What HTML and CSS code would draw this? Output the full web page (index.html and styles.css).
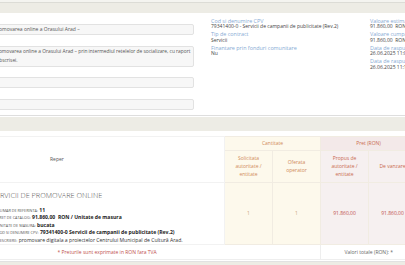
FILE: index.html
```html
<!DOCTYPE html>
<html lang="ro">
<head>
  <meta charset="UTF-8" />
  <meta name="viewport" content="width=device-width, initial-scale=1.0" />
  <title>Achizitie directa</title>
  <link rel="stylesheet" href="styles.css">
</head>
<body>
  <div class="page">
    <div class="topbar"></div>
    <div class="band"></div>

    <section class="panel">
      <div class="fields">
        <div class="field">Promovarea online a Orasului Arad –</div>
        <div class="field tall">Promovarea online a Orasului Arad – prin intermediul retelelor de socializare, cu raport<br>subscrisei.</div>
        <div class="field"></div>
        <div class="field"></div>
      </div>

      <div class="info">
        <div class="info-col first">
          <div class="item">
            <div class="label">Cod si denumire CPV</div>
            <div class="value">79341400-0 - Servicii de campanii de publicitate (Rev.2)</div>
          </div>
          <div class="item">
            <div class="label">Tip de contract</div>
            <div class="value">Servicii</div>
          </div>
          <div class="item">
            <div class="label">Finantare prin fonduri comunitare</div>
            <div class="value">Nu</div>
          </div>
        </div>
        <div class="info-col">
          <div class="item">
            <div class="label">Valoare estimata</div>
            <div class="value">91.860,00 &nbsp;RON</div>
          </div>
          <div class="item">
            <div class="label">Valoare cumparare directa</div>
            <div class="value">91.860,00 &nbsp;RON</div>
          </div>
          <div class="item">
            <div class="label">Data de raspuns ofertant</div>
            <div class="value">26.06.2025 11:00</div>
          </div>
          <div class="item">
            <div class="label">Data de raspuns autoritate</div>
            <div class="value">26.06.2025 11:15</div>
          </div>
        </div>
      </div>
    </section>

    <div class="band section-band"></div>

    <table class="items">
      <colgroup>
        <col class="c-reper">
        <col class="c-cell">
        <col class="c-cell">
        <col class="c-cell">
        <col class="c-cell">
      </colgroup>
      <thead>
        <tr class="head-top">
          <th class="reper" rowspan="2">Reper</th>
          <th class="qty" colspan="2">Cantitate</th>
          <th class="price" colspan="2">Pret (RON)</th>
        </tr>
        <tr class="head-sub">
          <th class="qty">Solicitata<br>autoritate /<br>entitate</th>
          <th class="qty">Oferata<br>operator</th>
          <th class="price">Propus de<br>autoritate /<br>entitate</th>
          <th class="price">De vanzare</th>
        </tr>
      </thead>
      <tbody>
        <tr class="row">
          <td class="desc">
            <div class="title">SERVICII DE PROMOVARE ONLINE</div>
            <div class="meta"><span class="key">Numar de referinta:</span> <b>11</b></div>
            <div class="meta"><span class="key">Pret de catalog:</span> <b>91.860,00 &nbsp;RON / Unitate de masura</b></div>
            <div class="meta"><span class="key">Unitate de masura:</span> <b>bucata</b></div>
            <div class="meta"><span class="key">Cod si denumire CPV:</span> <b>79341400-0 Servicii de campanii de publicitate (Rev.2)</b></div>
            <div class="meta"><span class="key">Descriere:</span> promovare digitala a proiectelor Centrului Municipal de Cultură Arad.</div>
          </td>
          <td class="qty num">1</td>
          <td class="qty num">1</td>
          <td class="price amount">91.860,00</td>
          <td class="price amount">91.860,00</td>
        </tr>
      </tbody>
      <tfoot>
        <tr class="foot">
          <td class="note" colspan="3">* Preturile sunt exprimate in RON fara TVA</td>
          <td class="totals" colspan="2">Valori totale (RON): *</td>
        </tr>
      </tfoot>
    </table>

    <div class="bottom"></div>
  </div>
</body>
</html>
```

FILE: styles.css
```css
body {
  margin: 0;
  overflow: hidden;
  background: #fff;
  font-family: "Open Sans", Arial, sans-serif;
  color: #444;
}
.page {
  margin-left: -12px;
  width: 440px;
}
.topbar {
  height: 2px;
  background: #f4f4f0;
  border-bottom: 1px solid #dcdcd6;
}
.band {
  height: 10px;
  background: #edece5;
}
.panel {
  display: flex;
  padding: 11px 0 5px;
  border-bottom: 1px solid #dedede;
}
.fields {
  width: 206px;
  flex-shrink: 0;
  display: flex;
  flex-direction: column;
  gap: 10.5px;
}
.field {
  min-height: 9px;
  padding: 0 5px;
  line-height: 9px;
  font-size: 5px;
  color: #555;
  white-space: nowrap;
  overflow: hidden;
  background: #f7f7f7;
  border: 1px solid #e2e2e2;
  border-radius: 2px;
}
.field.tall {
  padding: 0.5px 5px;
  font-size: 4.85px;
}
.info {
  display: flex;
  padding-left: 17px;
  margin-top: -5.5px;
}
.info-col {
  display: flex;
  flex-direction: column;
  gap: 3px;
  white-space: nowrap;
}
.info-col.first {
  width: 159px;
  flex-shrink: 0;
}
.label {
  font-size: 5.4px;
  line-height: 5.5px;
  color: #86aad4;
}
.value {
  font-size: 5px;
  line-height: 5px;
  color: #444;
}
.section-band {
  height: 14px;
  margin-top: 1px;
}
.items {
  margin-top: 5px;
  border-collapse: collapse;
  table-layout: fixed;
  width: 428px;
  font-size: 5px;
}
.c-reper {
  width: 236px;
}
.c-cell {
  width: 48px;
}
.items th,
.items td {
  padding: 0;
  font-weight: normal;
  text-align: center;
  border: 1px solid #f1ece2;
}
.items .reper {
  padding-left: 61px;
  text-align: left;
  color: #555;
  border-color: #f2f2f2;
  background: #fff;
}
.items .qty {
  background: #fdf9ec;
  color: #d08a5a;
}
.items .price {
  background: #f6f0f0;
  color: #c96a4f;
}
.head-top th {
  height: 13px;
}
.head-top .price {
  background: #f3e9e9;
}
.head-sub th {
  height: 31px;
  line-height: 8px;
}
.row td {
  height: 61px;
}
.items .desc {
  padding: 0 0 0 3px;
  text-align: left;
  vertical-align: top;
  background: #fff;
  border-color: #f2f2f2;
  color: #333;
}
.title {
  margin-top: 8px;
  font-size: 7.3px;
  line-height: 9px;
  font-weight: 300;
  color: #555;
  white-space: nowrap;
}
.meta {
  padding-left: 5px;
  margin-top: 2.4px;
  font-size: 5.1px;
  line-height: 5px;
  white-space: nowrap;
}
.title + .meta {
  margin-top: 8.5px;
}
.key {
  text-transform: uppercase;
  font-size: 3.8px;
  color: #555;
}
.meta b {
  font-weight: 700;
  color: #222;
}
.items .num {
  color: #c9a47a;
}
.items .amount {
  color: #c0504d;
}
.foot td {
  height: 14px;
  background: #fff;
  border-color: #eeeeee;
  border-left: none;
  border-right: none;
}
.items .note {
  padding-left: 69px;
  text-align: left;
  color: #c0504d;
}
.items .totals {
  color: #666;
  border-left: 1px solid #eeeeee;
}
.bottom {
  height: 6px;
  margin-top: 1px;
  border-top: 1px solid #e2e2e2;
  background: #edece5;
}
```
